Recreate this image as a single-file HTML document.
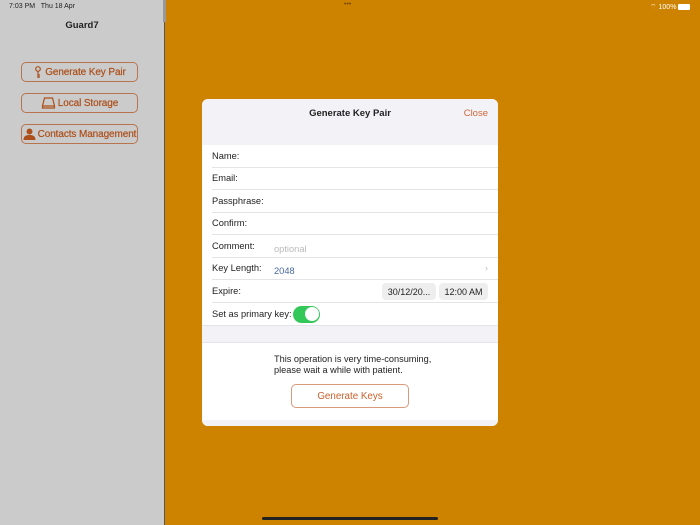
<!DOCTYPE html>
<html><head><style>
*{margin:0;padding:0;box-sizing:border-box}
body{width:700px;height:525px;overflow:hidden;background:#cd8300;font-family:"Liberation Sans",sans-serif;position:relative}
.side{position:absolute;left:0;top:0;width:164px;height:525px;background:#cbcbcb}
.div{position:absolute;left:164px;top:0;width:1px;height:525px;background:#555}
.sb{position:absolute;top:0;font-size:7px;color:#222}
.btn{position:absolute;left:21px;width:117px;height:20px;border:1px solid #b8744f;border-radius:5px;color:#ac4f1a;font-size:10px;display:flex;align-items:center;justify-content:center;gap:2px;white-space:nowrap;letter-spacing:-0.1px;-webkit-text-stroke:0.2px #ac4f1a}
.dlg{position:absolute;left:202px;top:99px;width:296px;height:327px;background:#fff;border-radius:6px;overflow:hidden}
.hd{height:46px;background:#f2f2f7;position:relative}
.row{height:22.5px;margin-left:10px;border-bottom:1px solid #e4e4e8;font-size:9.3px;color:#222;display:flex;align-items:center;position:relative}
.pill{position:absolute;top:3px;height:17px;background:#eeeeef;border-radius:4px;font-size:9px;display:flex;align-items:center;justify-content:center}
</style></head><body>
<div class="side"></div>
<div class="div"></div>
<div style="position:absolute;left:163px;top:0;width:3px;height:22px;background:#999"></div>
<div class="sb" style="left:9px;top:3px">7:03 PM &nbsp; Thu 18 Apr</div>
<div class="sb" style="left:344px;top:1px;color:#7a4a00">•••</div>
<div class="sb" style="left:650px;top:3px;color:#fff">⌔ 100% <span style="display:inline-block;width:12px;height:6px;background:#fff;border-radius:1px;vertical-align:middle"></span></div>
<div style="position:absolute;left:0;width:164px;top:20px;text-align:center;font-size:9.5px;font-weight:bold;color:#222">Guard7</div>
<div class="btn" style="top:62px"><svg width="10" height="13" viewBox="0 0 10 13"><circle cx="5" cy="3" r="2.3" fill="none" stroke="#ac4f1a" stroke-width="1.2"/><path d="M5 5v7M5 9h2M5 11h2" stroke="#ac4f1a" stroke-width="1.2" fill="none"/></svg>Generate Key Pair</div>
<div class="btn" style="top:93px"><svg width="15" height="12" viewBox="0 0 14 12"><path d="M3 1h8l2 8v2H1V9z M1 9h12" fill="none" stroke="#ac4f1a" stroke-width="1.2"/></svg> Local Storage</div>
<div class="btn" style="top:124px"><svg width="13" height="12" viewBox="0 0 13 12"><circle cx="6.5" cy="3.5" r="3" fill="#ac4f1a"/><path d="M0.5 12c0-4 2.5-5 6-5s6 1 6 5z" fill="#ac4f1a"/></svg>Contacts Management</div>
<div class="dlg">
<div class="hd"><div style="position:absolute;left:0;right:0;top:9px;text-align:center;font-size:9.5px;font-weight:bold;color:#222">Generate Key Pair</div><div style="position:absolute;right:10px;top:9px;font-size:9.5px;color:#d0683a">Close</div></div>
<div class="row">Name:</div>
<div class="row">Email:</div>
<div class="row">Passphrase:</div>
<div class="row">Confirm:</div>
<div class="row">Comment:<span style="position:absolute;left:62px;top:9px;color:#bbb">optional</span></div>
<div class="row">Key Length:<span style="position:absolute;left:62px;top:8px;color:#4a6aa0">2048</span><span style="position:absolute;right:10px;color:#bbb">›</span></div>
<div class="row">Expire:<div class="pill" style="left:170px;width:54px">30/12/20...</div><div class="pill" style="left:227px;width:49px">12:00 AM</div></div>
<div class="row" style="border:none">Set as primary key:<div style="position:absolute;left:81px;top:3px;width:27px;height:17px;border-radius:9px;background:#34c759"><div style="position:absolute;right:1.5px;top:1.5px;width:14px;height:14px;border-radius:50%;background:#fff"></div></div></div>
<div style="height:18px;background:#f2f2f7;border-top:1px solid #e4e4e8;border-bottom:1px solid #e4e4e8"></div>
<div style="margin-left:72px;margin-top:11px;font-size:9.2px;line-height:10.5px;color:#222">This operation is very time-consuming,<br>please wait a while with patient.</div>
<div style="position:absolute;left:89px;top:285px;width:118px;height:24px;border:1px solid #d89a7c;border-radius:5px;color:#c9602c;font-size:9.8px;display:flex;align-items:center;justify-content:center">Generate Keys</div>
<div style="position:absolute;left:0;right:0;bottom:0;height:6px;background:#f2f2f7"></div>
</div>
<div style="position:absolute;left:262px;top:517px;width:176px;height:3px;border-radius:2px;background:#222"></div>
</body></html>
